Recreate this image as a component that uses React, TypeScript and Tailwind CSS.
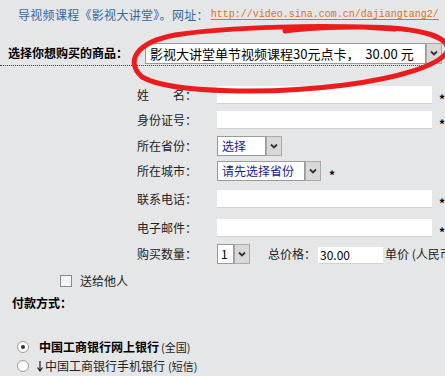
import React from 'react';

// 购卡页面 — 表单截图还原
const CJK = { fontFamily: '"Noto Sans CJK SC", "Noto Sans", sans-serif' };

function Arrow() {
  return (
    <div className="flex h-full w-[16px] shrink-0 items-center justify-center border border-[#a9a9a9] bg-[#d8d8d8]">
      <svg width="8" height="6" viewBox="0 0 8 6">
        <path d="M1 1.5 L4 4.5 L7 1.5" fill="none" stroke="#333" strokeWidth="1.8" />
      </svg>
    </div>
  );
}

function Star() {
  return <span className="mt-[8px] text-[12px] font-bold leading-none text-black">*</span>;
}

function Label({ children }: { children: React.ReactNode }) {
  return <div className="w-[80px] shrink-0 text-[12px] leading-none text-[#222]">{children}</div>;
}

function TextRow({ label, mt }: { label: React.ReactNode; mt: string }) {
  return (
    <div className={`flex h-[18px] items-center pl-[137px] ${mt}`}>
      <Label>{label}</Label>
      <div className="h-full w-[218px] border-b border-[#cfd2d6] bg-white" />
      <div className="ml-[7px] flex h-full items-center">
        <Star />
      </div>
    </div>
  );
}

export default function App() {
  return (
    <div className="relative h-[376px] w-[445px] overflow-hidden whitespace-nowrap bg-[#e5e6e8]" style={CJK}>
      {/* 顶部说明 */}
      <div className="mt-[5px] flex h-[20px] items-center pl-[18px] text-[12px] leading-none">
        <span className="text-[#35689f] tracking-[0.3px]">导视频课程《影视大讲堂》。网址：</span>
        <span
          className="ml-[2px] text-[10px] text-[#e0701e] underline underline-offset-2"
          style={{ fontFamily: '"Liberation Mono", monospace' }}
        >
          http://video.sina.com.cn/dajiangtang2/
        </span>
      </div>

      {/* 商品选择 */}
      <div className="mt-[17px] flex h-[22px] items-center pl-[8px]">
        <div className="w-[137px] shrink-0 text-[12px] font-bold leading-none text-black">选择你想购买的商品：</div>
        <div className="flex h-[21px] items-stretch">
          <div className="flex w-[281px] items-center overflow-hidden border border-[#9a9a9a] bg-white pl-[4px] text-[13px] leading-none text-black">
            影视大讲堂单节视频课程30元点卡，&nbsp;&nbsp;30.00 元
          </div>
          <Arrow />
        </div>
      </div>
      <div className="mt-[1px] w-[430px] border-t border-dotted border-[#444]" />

      <TextRow mt="mt-[20px]" label={<><span className="mr-[24px]">姓</span>名：</>} />
      <TextRow mt="mt-[7px]" label="身份证号：" />

      <div className="mt-[7px] flex h-[20px] items-center pl-[137px]">
        <Label>所在省份：</Label>
        <div className="flex h-full items-stretch">
          <div className="flex w-[49px] items-center border border-[#9a9a9a] bg-white pl-[4px] text-[12px] leading-none text-[#1a1a8c]">选择</div>
          <Arrow />
        </div>
      </div>

      <div className="mt-[5px] flex h-[20px] items-center pl-[137px]">
        <Label>所在城市：</Label>
        <div className="flex h-full items-stretch">
          <div className="flex w-[88px] items-center border border-[#9a9a9a] bg-white pl-[4px] text-[12px] leading-none text-[#1a1a8c]">请先选择省份</div>
          <Arrow />
        </div>
        <div className="ml-[8px] flex h-full items-center">
          <Star />
        </div>
      </div>

      <TextRow mt="mt-[9px]" label="联系电话：" />
      <TextRow mt="mt-[11px]" label="电子邮件：" />

      <div className="mt-[7px] flex h-[20px] items-center pl-[137px]">
        <Label>购买数量：</Label>
        <div className="flex h-full items-stretch">
          <div className="flex w-[17px] items-center border border-[#9a9a9a] bg-white pl-[3px] text-[12px] leading-none text-black">1</div>
          <Arrow />
        </div>
        <div className="ml-[18px] text-[12px] leading-none text-[#222]">总价格：</div>
        <div className="ml-[2px] flex h-[17px] w-[65px] shrink-0 items-center self-end border-b border-[#cfd2d6] bg-white pl-[2px] text-[12px] leading-none text-black">
          30.00
        </div>
        <div className="ml-[2px] text-[12px] leading-none text-[#222]">单价 (人民币</div>
      </div>

      <div className="mt-[11px] flex h-[12px] items-center pl-[60px]">
        <div className="h-[12px] w-[12px] border border-[#8a8a8a] bg-[#f4f4f4]" />
        <div className="ml-[8px] text-[12px] leading-none text-[#222]">送给他人</div>
      </div>

      <div className="mt-[9px] flex h-[14px] items-center pl-[12px] text-[12px] font-bold leading-none text-black">付款方式：</div>

      <div className="mt-[30px] flex h-[14px] items-center pl-[17px]">
        <div className="flex h-[12px] w-[12px] items-center justify-center rounded-full border border-[#9a9a9a] bg-white">
          <div className="h-[4px] w-[4px] rounded-full bg-[#333]" />
        </div>
        <div className="ml-[10px] text-[12px] font-bold leading-none text-black">中国工商银行网上银行</div>
        <div className="ml-[2px] text-[11px] leading-none text-[#222]">(全国)</div>
      </div>

      <div className="mt-[5px] flex h-[14px] items-center pl-[17px]">
        <div className="h-[12px] w-[12px] rounded-full border border-[#9a9a9a] bg-white" />
        <svg className="ml-[8px]" width="6" height="11" viewBox="0 0 6 11">
          <path d="M3 0 V9 M0.5 6.5 L3 10 L5.5 6.5" fill="none" stroke="#222" strokeWidth="1.2" />
        </svg>
        <div className="ml-[2px] text-[12px] leading-none text-[#222]">中国工商银行手机银行</div>
        <div className="ml-[3px] text-[11px] leading-none text-[#222]">(短信)</div>
      </div>

      {/* 红色手绘圈 */}
      <svg className="pointer-events-none absolute left-0 top-0" width="445" height="376" viewBox="0 0 445 376">
        <path
          d="M395 29 C330 24 225 27 175 35 C138 42 124 60 142 77 C172 94 275 94 345 85 C398 78 438 66 447 52 C452 38 425 27 360 27 C330 27 300 29 285 31"
          fill="none"
          stroke="#ec1c1c"
          strokeWidth="5"
          strokeLinecap="round"
          strokeLinejoin="round"
        />
      </svg>
    </div>
  );
}
